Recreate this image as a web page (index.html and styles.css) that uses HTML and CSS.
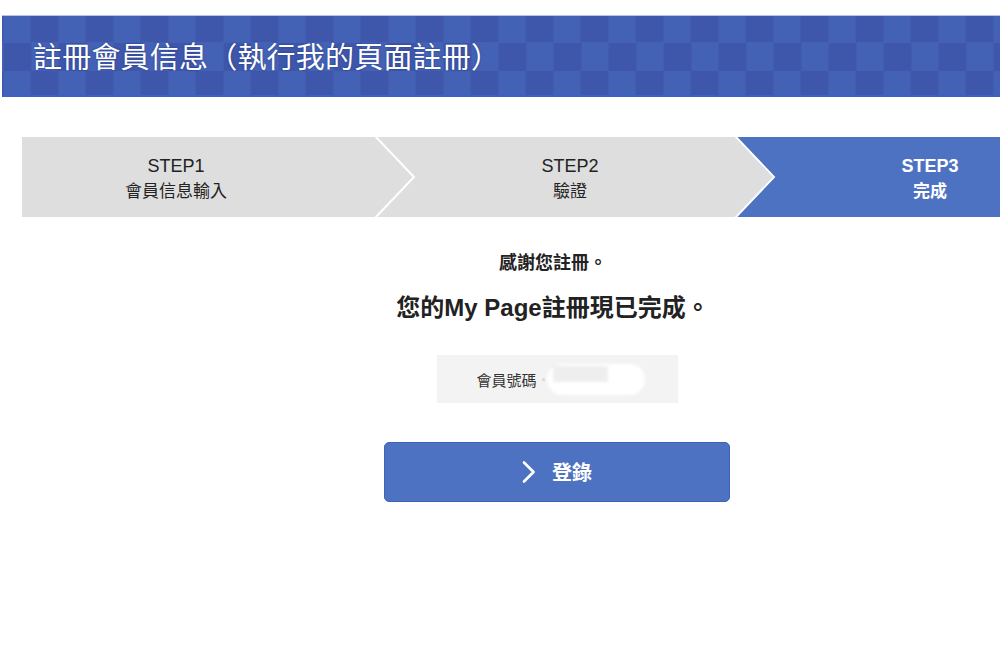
FILE: index.html
```html
<!DOCTYPE html>
<html lang="zh-Hant">
<head>
<meta charset="utf-8">
<title>註冊會員信息</title>
<link rel="stylesheet" href="styles.css">
</head>
<body>
<header class="page-header">
  <h1 class="page-title">註冊會員信息（執行我的頁面註冊）</h1>
</header>

<ol class="steps">
  <li class="step step-1">
    <div class="step-label"><span class="step-num">STEP1</span><span class="step-name">會員信息輸入</span></div>
    <svg class="step-arrow" width="40" height="80" viewBox="0 0 40 80"><polygon points="0,0 38,40 0,80" fill="#dedede"/><polyline points="0,-1 39,40 0,81" fill="none" stroke="#ffffff" stroke-width="2"/></svg>
  </li>
  <li class="step step-2">
    <div class="step-label"><span class="step-num">STEP2</span><span class="step-name">驗證</span></div>
    <svg class="step-arrow" width="40" height="80" viewBox="0 0 40 80"><polygon points="0,0 38,40 0,80" fill="#dedede"/><polyline points="0,-1 39,40 0,81" fill="none" stroke="#ffffff" stroke-width="2"/></svg>
  </li>
  <li class="step step-3 is-current">
    <div class="step-label"><span class="step-num">STEP3</span><span class="step-name">完成</span></div>
  </li>
</ol>

<main class="main">
  <p class="thanks">感謝您註冊。</p>
  <p class="done">您的My Page註冊現已完成。</p>
  <div class="member-box">
    <span class="member-label">會員號碼</span>
    <span class="member-dot"></span>
    <span class="member-hidden"><span class="member-hidden-inner"></span></span>
  </div>
  <button class="login-btn" type="button">
    <svg class="login-icon" width="14" height="22" viewBox="0 0 14 22"><polyline points="2,1.5 11.5,11 2,20.5" fill="none" stroke="#ffffff" stroke-width="2.6" stroke-linecap="round" stroke-linejoin="round"/></svg>
    <span class="login-text">登錄</span>
  </button>
</main>
</body>
</html>
```

FILE: styles.css
```css
html, body {
  margin: 0;
  padding: 0;
  background: #ffffff;
  overflow: hidden;
}
body {
  width: 1000px;
  height: 666px;
  font-family: "Liberation Sans", "Noto Sans CJK TC", sans-serif;
  color: #222222;
}

.page-header {
  margin: 15px 0 0 2px;
  height: 79px;
  border-top: 1px solid #b8c3e6;
  border-bottom: 2px solid #3b60c6;
  background-color: #4461b4;
  background-image: repeating-conic-gradient(#3e57ab 0 25%, #4462b5 0 50%);
  background-size: 55px 55px;
  background-position: 1.5px -1px;
  display: flex;
  align-items: center;
}
.page-title {
  margin: 0 0 0 31px;
  font-family: "Noto Sans CJK TC", sans-serif;
  font-size: 29px;
  font-weight: 400;
  line-height: 1;
  color: #ffffff;
  letter-spacing: 0.2px;
  text-shadow: 0 0 2px rgba(20, 30, 90, 0.6);
}

.steps {
  list-style: none;
  margin: 40px 0 0 22px;
  padding: 0;
  height: 80px;
  display: flex;
}
.step {
  position: relative;
  height: 80px;
  background: #dedede;
  display: flex;
  align-items: center;
  flex-shrink: 0;
}
.step-1 { width: 353px; }
.step-2 { width: 322px; padding-left: 38px; }
.step-3 { flex: 1 1 0; min-width: 0; padding-left: 38px; background: #4d72c2; }
.step-label {
  width: 308px;
  flex-shrink: 0;
  padding-top: 4px;
  display: flex;
  flex-direction: column;
  align-items: center;
  font-size: 17px;
  line-height: 26px;
  color: #222222;
}
.step-2 .step-label,
.step-3 .step-label { width: 314px; }
.step-num { font-size: 18px; }
.is-current .step-label { color: #ffffff; font-weight: 700; }
.step-arrow {
  position: absolute;
  top: 0;
  right: -40px;
  z-index: 1;
  overflow: visible;
}

.main {
  width: 1070px;
  margin-left: 22px;
  display: flex;
  flex-direction: column;
  align-items: center;
}
.thanks {
  margin: 32px 0 0;
  padding-right: 8px;
  font-size: 18px;
  line-height: 28px;
  font-weight: 700;
}
.done {
  margin: 14px 0 0;
  padding-right: 8px;
  font-size: 24px;
  line-height: 34px;
  font-weight: 700;
}
.member-box {
  margin-top: 30px;
  width: 241px;
  height: 48px;
  background: #f3f3f3;
  display: flex;
  align-items: center;
  box-sizing: border-box;
  padding-left: 40px;
}
.member-label {
  font-size: 15px;
  color: #333333;
}
.member-dot {
  width: 3px;
  height: 3px;
  margin-left: 5px;
  border-radius: 50%;
  background: #d8d8d8;
}
.member-hidden {
  margin-left: 2px;
  width: 98px;
  height: 31px;
  border-radius: 16px;
  background: #ffffff;
  filter: blur(1.5px);
  display: block;
}
.member-hidden-inner {
  display: block;
  margin: 2px 0 0 6px;
  width: 55px;
  height: 16px;
  background: #eeeeee;
}

.login-btn {
  margin-top: 39px;
  width: 346px;
  height: 60px;
  border: 1px solid #3f63b8;
  border-radius: 5px;
  background: #4d72c2;
  display: flex;
  align-items: center;
  justify-content: center;
  gap: 16px;
  padding: 0;
  font-family: "Noto Sans CJK TC", sans-serif;
  cursor: pointer;
}
.login-text {
  color: #ffffff;
  font-size: 20px;
  font-weight: 700;
  line-height: 1;
}
```
